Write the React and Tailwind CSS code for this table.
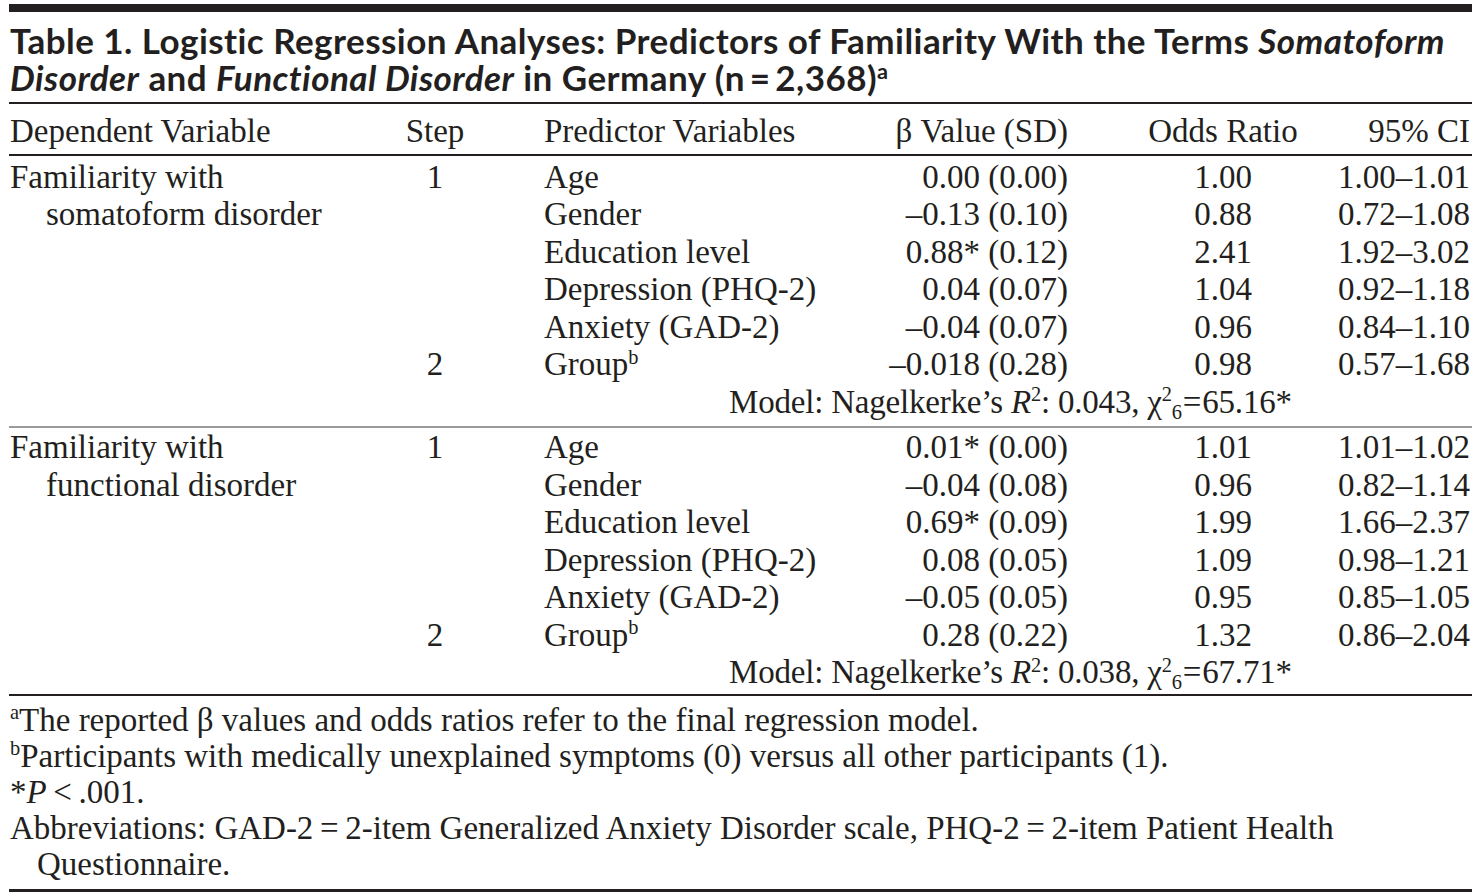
import React from "react";

const serif = { fontFamily: '"Liberation Serif", "Times New Roman", serif' };

const grid = "grid grid-cols-[382px_88px_402px_240px_204px_147px] leading-[37.5px]";

function Sup({ children }) {
  return <span className="relative top-[-0.55em] text-[0.62em] leading-none">{children}</span>;
}

function Row({ dep, dep2, step, pred, sup, beta, or, ci }) {
  return (
    <div className={grid}>
      <div className="pl-[1px] whitespace-nowrap">
        {dep ? dep : null}
        {dep2 ? <span className="pl-[36px]">{dep2}</span> : null}
      </div>
      <div className="text-center">{step}</div>
      <div className="pl-[65px] whitespace-nowrap">
        {pred}
        {sup ? <Sup>{sup}</Sup> : null}
      </div>
      <div className="text-right pr-[53px] whitespace-nowrap">{beta}</div>
      <div className="text-center">{or}</div>
      <div className="text-right pr-[2px] whitespace-nowrap">{ci}</div>
    </div>
  );
}

function Model({ r2, chi }) {
  return (
    <div className="leading-[37.5px] pl-[720px] whitespace-nowrap tracking-[-0.2px]">
      Model: Nagelkerke’s <i>R</i>
      <Sup>2</Sup>: {r2}, χ<Sup>2</Sup>
      <span className="relative top-[0.3em] text-[0.62em] leading-none">6</span>
      <span className="px-[1px]">=</span>
      {chi}*
    </div>
  );
}

function Group({ a, b, rows, model }) {
  return (
    <div>
      {rows.map((r, i) => (
        <Row
          key={i}
          dep={i === 0 ? a : null}
          dep2={i === 1 ? b : null}
          {...r}
        />
      ))}
      <Model {...model} />
    </div>
  );
}

export default function App() {
  const g1 = [
    { step: "1", pred: "Age", beta: "0.00 (0.00)", or: "1.00", ci: "1.00–1.01" },
    { step: "", pred: "Gender", beta: "–0.13 (0.10)", or: "0.88", ci: "0.72–1.08" },
    { step: "", pred: "Education level", beta: "0.88* (0.12)", or: "2.41", ci: "1.92–3.02" },
    { step: "", pred: "Depression (PHQ-2)", beta: "0.04 (0.07)", or: "1.04", ci: "0.92–1.18" },
    { step: "", pred: "Anxiety (GAD-2)", beta: "–0.04 (0.07)", or: "0.96", ci: "0.84–1.10" },
    { step: "2", pred: "Group", sup: "b", beta: "–0.018 (0.28)", or: "0.98", ci: "0.57–1.68" },
  ];
  const g2 = [
    { step: "1", pred: "Age", beta: "0.01* (0.00)", or: "1.01", ci: "1.01–1.02" },
    { step: "", pred: "Gender", beta: "–0.04 (0.08)", or: "0.96", ci: "0.82–1.14" },
    { step: "", pred: "Education level", beta: "0.69* (0.09)", or: "1.99", ci: "1.66–2.37" },
    { step: "", pred: "Depression (PHQ-2)", beta: "0.08 (0.05)", or: "1.09", ci: "0.98–1.21" },
    { step: "", pred: "Anxiety (GAD-2)", beta: "–0.05 (0.05)", or: "0.95", ci: "0.85–1.05" },
    { step: "2", pred: "Group", sup: "b", beta: "0.28 (0.22)", or: "1.32", ci: "0.86–2.04" },
  ];

  return (
    <div className="w-[1482px] h-[896px] bg-white text-[#231f20] overflow-hidden">
      <div className="pl-[9px] pr-[10px] pt-[4px]">
        <div className="h-[8px] bg-[#231f20]" />
        <div
          className="pt-[10px] pb-[6px] pl-[1px] text-[35px] leading-[37px] font-bold tracking-[0.45px]"
          style={{ fontFamily: 'Lato, "Open Sans", sans-serif' }}
        >
          <div className="whitespace-nowrap">
            Table 1. Logistic Regression Analyses: Predictors of Familiarity With the Terms{" "}
            <i>Somatoform</i>
          </div>
          <div className="whitespace-nowrap">
            <i>Disorder</i> and <i>Functional Disorder</i> in Germany (n{"\u2009"}={"\u2009"}2,368)
            <Sup>a</Sup>
          </div>
        </div>
        <div className="h-[2px] bg-[#231f20]" />
        <div className="text-[33px]" style={serif}>
          <div className={grid + " pt-[9px] pb-[3px]"}>
            <div className="pl-[1px]">Dependent Variable</div>
            <div className="text-center">Step</div>
            <div className="pl-[65px]">Predictor Variables</div>
            <div className="text-right pr-[53px]">β Value (SD)</div>
            <div className="text-center">Odds Ratio</div>
            <div className="text-right pr-[2px]">95% CI</div>
          </div>
          <div className="h-[2px] bg-[#231f20]" />
          <div className="pt-[3px] pb-[5px]">
            <Group
              a="Familiarity with"
              b="somatoform disorder"
              rows={g1}
              model={{ r2: "0.043", chi: "65.16" }}
            />
          </div>
          <div className="h-[2px] bg-[#9a9a9a]" />
          <div className="pt-[1px] pb-[2px]">
            <Group
              a="Familiarity with"
              b="functional disorder"
              rows={g2}
              model={{ r2: "0.038", chi: "67.71" }}
            />
          </div>
          <div className="h-[2px] bg-[#231f20]" />
          <div className="pt-[6px] pb-[7px] leading-[36px] pl-[1px]">
            <div className="whitespace-nowrap">
              <Sup>a</Sup>The reported β values and odds ratios refer to the final regression model.
            </div>
            <div className="whitespace-nowrap">
              <Sup>b</Sup>Participants with medically unexplained symptoms (0) versus all other participants (1).
            </div>
            <div className="whitespace-nowrap">
              *<i>P</i>{"\u2009"}&lt;{"\u2009"}.001.
            </div>
            <div className="whitespace-nowrap">
              Abbreviations: GAD-2{"\u2009"}={"\u2009"}2-item Generalized Anxiety Disorder scale, PHQ-2{"\u2009"}={"\u2009"}2-item Patient Health
            </div>
            <div className="whitespace-nowrap pl-[27px]">Questionnaire.</div>
          </div>
          <div className="h-[3px] bg-[#231f20]" />
        </div>
      </div>
    </div>
  );
}
